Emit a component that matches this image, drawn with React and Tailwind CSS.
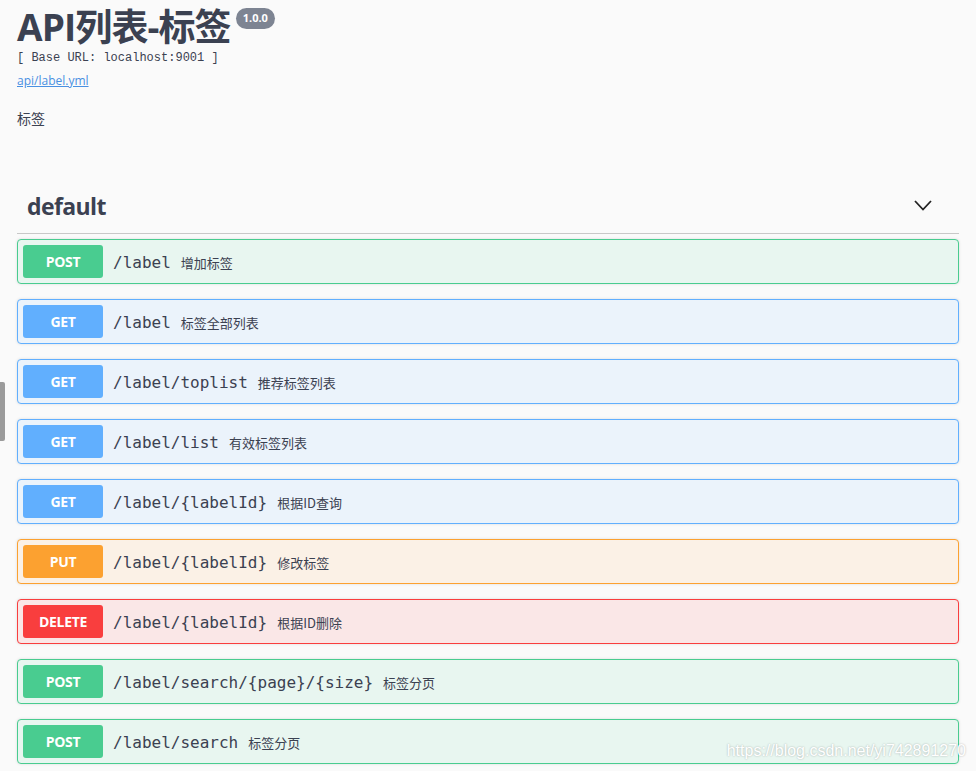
import React from "react"

const ops = [
  { m: "POST", p: "/label", d: "增加标签" },
  { m: "GET", p: "/label", d: "标签全部列表" },
  { m: "GET", p: "/label/toplist", d: "推荐标签列表" },
  { m: "GET", p: "/label/list", d: "有效标签列表" },
  { m: "GET", p: "/label/{labelId}", d: "根据ID查询" },
  { m: "PUT", p: "/label/{labelId}", d: "修改标签" },
  { m: "DELETE", p: "/label/{labelId}", d: "根据ID删除" },
  { m: "POST", p: "/label/search/{page}/{size}", d: "标签分页" },
  { m: "POST", p: "/label/search", d: "标签分页" },
]

const styles = {
  POST: { row: "bg-[#e8f6f0] border-[#49cc90]", badge: "bg-[#49cc90]" },
  GET: { row: "bg-[#ebf3fb] border-[#61affe]", badge: "bg-[#61affe]" },
  PUT: { row: "bg-[#fbf1e6] border-[#fca130]", badge: "bg-[#fca130]" },
  DELETE: { row: "bg-[#fae7e7] border-[#f93e3e]", badge: "bg-[#f93e3e]" },
}

const sans = "font-['Open_Sans','Noto_Sans_CJK_SC',sans-serif]"

const OpRow = ({ op }) => {
  const s = styles[op.m]
  return (
    <div className={`flex items-center h-[45px] mb-[15px] border rounded-[4px] shadow-[0_0_3px_rgba(0,0,0,0.12)] ${s.row}`}>
      <span className={`ml-[5px] w-[80px] h-[33px] rounded-[3px] flex items-center justify-center text-white text-[14px] font-bold tracking-[-0.3px] ${sans} ${s.badge}`}>
        {op.m}
      </span>
      <span className="ml-[10px] pt-[3px] text-[16px] text-[#3b4151] font-['DejaVu_Sans_Mono',monospace]">{op.p}</span>
      <span className="ml-[10px] pt-[2px] text-[13px] text-[#3b4151] font-['Noto_Sans_CJK_SC',sans-serif]">{op.d}</span>
    </div>
  )
}

export default function App() {
  return (
    <div className={`relative w-[976px] h-[771px] overflow-hidden bg-[#fafafa] text-[#3b4151] ${sans}`}>
      <div className="px-[17px]">
        <div className="flex items-start mt-[5px] h-[44px]">
          <h2 className="text-[37px] leading-[44px] font-bold tracking-[-0.9px]">API列表-标签</h2>
          <span className="ml-[5px] mt-[3px] h-[21px] px-[7px] rounded-full bg-[#7d8492] text-white text-[11px] font-bold flex items-center">1.0.0</span>
        </div>
        <div className="mt-[1px] h-[16px] leading-[16px] text-[12px] text-[#3b4151] font-['Liberation_Mono',monospace] font-light">[ Base URL: localhost:9001 ]</div>
        <div className="mt-[5px] h-[16px] leading-[16px]">
          <a className="text-[12px] text-[#4990e2] underline">api/label.yml</a>
        </div>
        <div className="mt-[21px] h-[20px] leading-[20px] text-[14px] font-['Noto_Sans_CJK_SC',sans-serif]">标签</div>

        <div className="mt-[62px] h-[44px] flex items-start justify-between border-b border-[#c8c8c8] pl-[10px] pr-[27px]">
          <span className="text-[23px] leading-[32px] font-bold tracking-[-0.6px]">default</span>
          <svg className="mt-[10px]" width="18" height="11" viewBox="0 0 18 11" fill="none" stroke="#222" strokeWidth="1.8">
            <polyline points="1,1 9,9.5 17,1" />
          </svg>
        </div>

        <div className="mt-[5px]">
          {ops.map((op, i) => (
            <OpRow key={i} op={op} />
          ))}
        </div>
      </div>

      <div className="absolute left-0 top-[382px] w-[5px] h-[59px] bg-[#9b9b9b] rounded-r-[2px]" />
      <div className="absolute right-[10px] bottom-[8px] text-[16px] text-white font-['Liberation_Sans',sans-serif] [text-shadow:0_0_2px_rgba(0,0,0,0.3)]">
        https://blog.csdn.net/yi742891270
      </div>
    </div>
  )
}
